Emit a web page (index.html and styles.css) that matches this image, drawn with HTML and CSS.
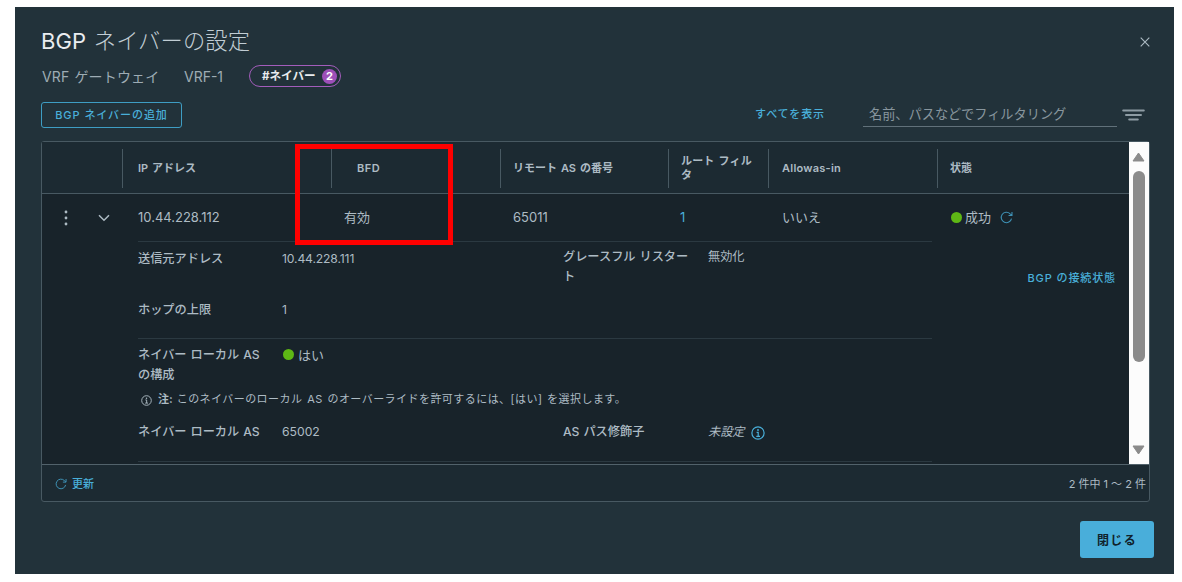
FILE: index.html
```html
<!DOCTYPE html>
<html lang="ja">
<head>
<meta charset="utf-8">
<title>BGP ネイバーの設定</title>
<link rel="stylesheet" href="styles.css">
</head>
<body>
<svg class="defs" width="0" height="0">
  <symbol id="refresh" viewBox="0 0 14 14"><path d="M12.4 8.1A5.6 5.6 0 1 1 10.9 3L12.8 4.7M12.9 1.2V4.8H9.2" fill="none" stroke="currentColor" stroke-width="1.15"/></symbol>
  <symbol id="info" viewBox="0 0 14 14"><circle cx="7" cy="7" r="6.1" fill="none" stroke="currentColor" stroke-width="1.2"/><circle cx="7" cy="4" r="0.95" fill="currentColor"/><path d="M5.6 6.3H7.2V10.2M5.3 10.3H9" fill="none" stroke="currentColor" stroke-width="1.2"/></symbol>
</svg>
<main class="modal">
  <header class="title-row">
    <h1 class="title"><span class="title-latin">BGP</span> ネイバーの設定</h1>
    <svg class="close-icon" viewBox="0 0 10 10"><path d="M0.7 0.7L9.3 9.3M9.3 0.7L0.7 9.3" stroke="currentColor" stroke-width="1.1" fill="none"/></svg>
  </header>
  <div class="context-row">
    <span class="gateway">VRF ゲートウェイ</span>
    <span class="vrf">VRF-1</span>
    <span class="tag"><span class="tag-text">#ネイバー</span><span class="count">2</span></span>
  </div>
  <div class="toolbar">
    <button class="add-button">BGP ネイバーの追加</button>
    <a class="show-all">すべてを表示</a>
    <div class="filter">名前、パスなどでフィルタリング</div>
    <svg class="filter-icon" viewBox="0 0 23 12"><path d="M1.2 1.5H21.8M4 6H19M7.2 10.5H15.8" stroke="currentColor" stroke-width="2" stroke-linecap="round"/></svg>
  </div>
  <section class="datagrid">
    <div class="viewport">
      <div class="table">
        <div class="grid-row head">
          <div class="cell"></div>
          <div class="cell sep">IP アドレス</div>
          <div class="cell sep bfd">BFD</div>
          <div class="cell sep">リモート AS の番号</div>
          <div class="cell sep">ルート フィル<br>タ</div>
          <div class="cell sep allow">Allowas-in</div>
          <div class="cell sep">状態</div>
        </div>
        <div class="grid-row data">
          <div class="actions">
            <svg class="dots" viewBox="0 0 4 16"><g fill="currentColor"><circle cx="2" cy="2" r="1.4"/><circle cx="2" cy="8" r="1.4"/><circle cx="2" cy="14" r="1.4"/></g></svg>
            <svg class="caret" viewBox="0 0 12 8"><path d="M1 1.2L6 6.2L11 1.2" fill="none" stroke="currentColor" stroke-width="1.5"/></svg>
          </div>
          <div class="cell num">10.44.228.112</div>
          <div class="cell enabled">有効</div>
          <div class="cell num">65011</div>
          <div class="cell num link">1</div>
          <div class="cell">いいえ</div>
          <div class="cell status"><i class="dot"></i><span>成功</span><svg class="refresh"><use href="#refresh"/></svg></div>
        </div>
        <div class="detail">
          <div class="fields">
            <div class="group first">
              <span class="label">送信元アドレス</span><span class="value num address">10.44.228.111</span>
              <span class="label raised">グレースフル リスタート</span><span class="value raised">無効化</span>
              <span class="label hop">ホップの上限</span><span class="value hop num">1</span>
            </div>
            <div class="group second">
              <span class="label">ネイバー ローカル AS の構成</span><span class="value yes"><i class="dot"></i>はい</span>
              <p class="note"><svg class="note-icon"><use href="#info"/></svg><b>注:</b> <span class="note-text">このネイバーのローカル AS のオーバーライドを許可するには、[はい] を選択します。</span></p>
              <span class="label">ネイバー ローカル AS</span><span class="value num">65002</span>
              <span class="label">AS パス修飾子</span><span class="value unset"><em>未設定</em><svg class="info-icon"><use href="#info"/></svg></span>
            </div>
          </div>
          <a class="connection">BGP の接続状態</a>
        </div>
      </div>
      <div class="scrollbar">
        <svg class="arrow" viewBox="0 0 13 10"><path d="M6.5 1L12 9H1Z" fill="currentColor" stroke="currentColor" stroke-linejoin="round"/></svg>
        <div class="track"><div class="thumb"></div></div>
        <svg class="arrow" viewBox="0 0 13 10"><path d="M6.5 9L12 1H1Z" fill="currentColor" stroke="currentColor" stroke-linejoin="round"/></svg>
      </div>
    </div>
    <footer class="grid-footer">
      <a class="reload"><svg class="reload-icon"><use href="#refresh"/></svg>更新</a>
      <span class="range">2 件中 1 ～ 2 件</span>
    </footer>
  </section>
  <div class="modal-footer"><button class="close-button">閉じる</button></div>
  <div class="highlight"></div>
</main>
</body>
</html>
```
FILE: styles.css
```css
* { box-sizing: border-box; }
body { margin: 0; padding: 7px 8px 8px 15px; background: #fff; height: 582px; overflow: hidden; }
svg { flex: none; display: block; }
.defs { position: absolute; }
.modal { position: relative; height: 567px; background: #22323a; color: #adbbc4; font: 13px/20px Inter, "Noto Sans CJK JP", sans-serif; padding: 19px 20px 0 26px; white-space: nowrap; }

.title-row { display: flex; height: 30px; justify-content: space-between; padding-right: 4px; }
.title { margin: 0; font-size: 22.3px; line-height: 30px; font-weight: 300; color: #c1cdd4; word-spacing: 1.2px; letter-spacing: .1px; }
.title-latin { font-weight: 400; color: #eaedf0; font-size: 22px; }
.close-icon { width: 10px; height: 10px; margin-top: 11px; color: #adbbc4; }

.context-row { display: flex; height: 22px; margin-top: 9px; align-items: flex-start; font-size: 14px; line-height: 24px; color: #9eacb4; padding-left: 1px; }
.gateway { width: 142px; letter-spacing: .15px; word-spacing: 1px; }
.vrf { width: 65px; }
.tag { width: 92px; height: 22px; line-height: 22px; border: 1px solid #a35dbb; border-radius: 11px; display: flex; align-items: center; justify-content: space-between; padding: 0 3px 0 12px; color: #e9ecef; font-size: 11px; font-weight: 700; }
.tag-text { font-size: 11.6px; }
.count { width: 15px; height: 15px; border-radius: 50%; background: #9d4fb8; color: #fff; line-height: 15px; text-align: center; }

.toolbar { display: flex; height: 26px; margin-top: 15px; }
.add-button { width: 141px; height: 26px; padding: 0; border: 1px solid #3e9dc3; border-radius: 3px; background: none; color: #49afd9; font: 500 11px/22px Inter, "Noto Sans CJK JP", sans-serif; letter-spacing: .95px; }
.show-all { margin-left: 573px; width: 108px; color: #49afd9; font-size: 11px; line-height: 24px; letter-spacing: .9px; font-weight: 500; }
.filter { width: 254px; height: 25px; padding-left: 6px; border-bottom: 1px solid #61717a; color: #88969e; font-size: 13.2px; line-height: 24px; }
.filter-icon { width: 23px; height: 12px; margin: 7px 0 0 5px; color: #8e9ca4; }

.datagrid { margin-top: 13px; width: 1109px; height: 361px; border: 1px solid #485962; border-radius: 3px; background: #1c2a32; }
.viewport { height: 322px; display: flex; overflow: hidden; background: #18232a; }
.table { width: 1087px; }
.grid-row { display: grid; grid-template-columns: 80px 209px 169px 168px 100px 169px 192px; }
.head { height: 52px; background: #1c2a32; border-bottom: 1px solid #485962; color: #adbbc4; font-size: 11px; line-height: 14px; font-weight: 600; padding-top: 7px; word-spacing: 1.2px; }
.cell { padding-left: 15px; }
.head .cell { height: 39px; display: flex; align-items: center; padding: 0 0 2px 12px; }
.head .sep { border-left: 1px solid #485962; }
.head .sep:nth-child(2) { padding-left: 15px; }
.head .sep:nth-child(5) { letter-spacing: .15px; }
.head .allow { padding-left: 13px; letter-spacing: .25px; }
.head .bfd { padding-left: 25px; letter-spacing: .5px; }
.data { height: 47px; line-height: 46px; }
.data .cell { padding-left: 13px; }
.data .cell:nth-child(2) { padding-left: 16px; }
.data .cell:nth-child(6) { padding-left: 14px; }
.data .link { color: #49afd9; padding-left: 12px; }
.actions { display: flex; padding: 0 12px 0 22px; justify-content: space-between; align-items: center; }
.dots { width: 4px; height: 16px; }
.caret { width: 12px; height: 8px; }
.dot { width: 11px; height: 11px; border-radius: 50%; background: #5eb715; flex: none; }
.data .status { display: flex; align-items: center; padding-left: 14px; line-height: 45px; }
.status span { margin-left: 3px; width: 35px; }
.refresh { width: 13px; height: 13px; color: #3e91b5; }
.detail { display: flex; justify-content: space-between; padding: 0 13px 0 96px; }
.fields { width: 794px; border-top: 1px solid #2b3941; }
.group { display: grid; grid-template-columns: 144px 281px 145px 224px; font-size: 12.2px; }
.label { font-weight: 500; white-space: normal; width: 128px; word-spacing: .7px; }
.address { letter-spacing: -.15px; }
.first { height: 97px; padding-top: 7px; grid-template-rows: 50px 25px; border-bottom: 1px solid #2b3941; }
.raised { margin-top: -2px; }
.hop { margin-top: 1px; }
.second { height: 123px; padding-top: 6px; grid-template-rows: 40px 37px 39px; border-bottom: 1px solid #2b3941; }
.yes { display: flex; align-items: center; height: 19px; gap: 4px; font-size: 13px; padding-left: 1px; grid-column: 2 / 5; }
.note { grid-column: 1 / 5; display: flex; margin: 0; padding: 4px 0 0 3px; font-size: 11px; height: 24px; }
.note-text { letter-spacing: .45px; word-spacing: 1.2px; }
.note b { margin: 0 4px 0 6px; }
.note-icon { width: 11px; height: 11px; margin-top: 6px; }
.unset { display: flex; gap: 6px; }
.info-icon { width: 14px; height: 14px; margin-top: 4px; color: #49afd9; }
.connection { margin-top: 27px; color: #49afd9; font-size: 11px; font-weight: 500; letter-spacing: .9px; }
.scrollbar { width: 20px; background: #fcfcfc; display: flex; flex-direction: column; align-items: center; padding: 10px 1px 9px 0; color: #8b8b8b; }
.arrow { width: 13px; height: 10px; }
.track { flex: 1; padding-top: 9px; }
.thumb { width: 12px; height: 191px; border-radius: 6px; background: #8b8b8b; }
.grid-footer { height: 37px; border-top: 1px solid #52626b; display: flex; justify-content: space-between; align-items: center; padding: 2px 3px 0 13px; font-size: 11px; }
.reload { display: flex; align-items: center; gap: 5px; color: #49afd9; font-weight: 500; }
.reload-icon { width: 12px; height: 12px; color: #3e91b5; }
.modal-footer { display: flex; justify-content: flex-end; margin-top: 19px; }
.close-button { width: 74px; height: 37px; border: 0; border-radius: 3px; background: #49aeda; color: #10222b; font: 700 12px/37px "Noto Sans CJK JP", sans-serif; letter-spacing: 1.4px; padding: 0; }
.highlight { position: absolute; left: 280px; top: 137px; width: 158px; height: 101px; border: 5px solid #f00; }
```
